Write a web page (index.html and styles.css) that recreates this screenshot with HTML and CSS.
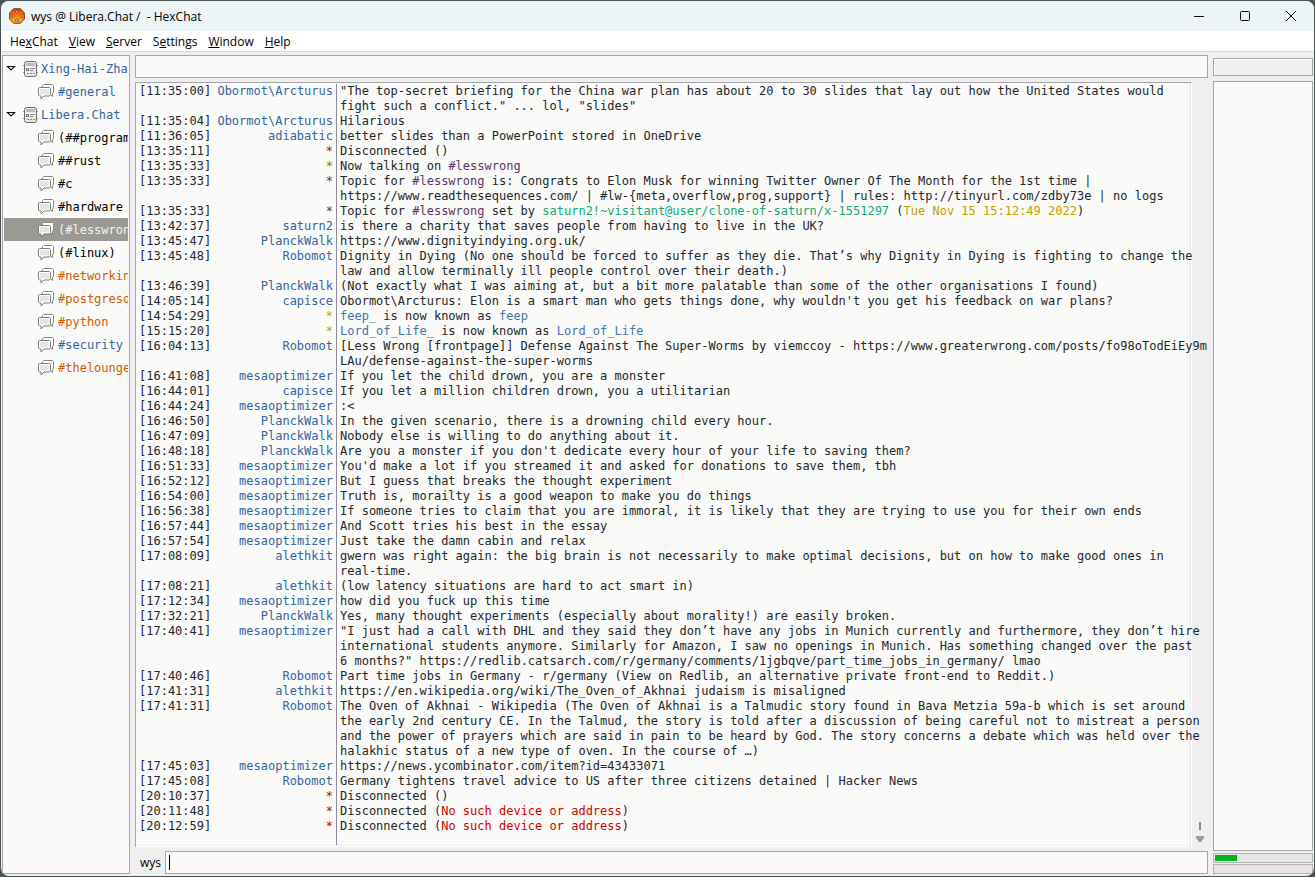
FILE: index.html
```html
<!DOCTYPE html>
<html lang="en">
<head>
    <meta charset="UTF-8">
    <meta name="viewport" content="width=device-width, initial-scale=1.0">
    <title>wys @ Libera.Chat / - HexChat</title>
    <link rel="stylesheet" href="styles.css">
</head>
<body>
    <!-- shared icons -->
    <svg class="defs" width="0" height="0" aria-hidden="true">
        <symbol id="arrow" viewBox="0 0 10 7">
            <path d="M1.500 1.500h7L5 5z" fill="#fff" stroke="#111" stroke-width="1.2"/>
        </symbol>
        <symbol id="server" viewBox="0 0 16 16">
            <path d="M0 4.500h2M0 11.500h2M13 4.500h2M13 11.500h2" stroke="#999"/>
            <rect x="1.500" y=".5" width="12" height="15" rx="2" fill="#e8e8e6" stroke="#6c6c6a"/>
            <rect x="3" y="2" width="9" height="3" fill="#bcbcba"/>
            <path d="M3 6.500h9" stroke="#fff"/>
            <rect x="3.500" y="7.500" width="2" height="2" fill="#fff" stroke="#777"/>
            <path d="M7 7.500h5M7 9.500h3" stroke="#8c8c8a"/>
            <path d="M4 12.500h2M7 12.500h2M10 12.500h2" stroke="#888"/>
        </symbol>
        <symbol id="channel" viewBox="0 0 16 16">
            <path d="M4.500 3V1.500l1-1h9l1 1V8l-1 2v2.500L12 10z" fill="#fff" stroke="#888885"/>
            <path d="M1.500 3.500h10l1 1v6l-1 1.500H6l-3 3v-3H1.500l-1-1v-7z" fill="#fff" stroke="#7c7c7a"/>
            <path d="M2 5h9v5.500H2z" fill="#e4e4e2"/>
        </symbol>
    </svg>

    <div class="window">
        <header class="titlebar">
            <svg class="logo" width="16" height="16" viewBox="0 0 16 16">
                <defs>
                    <linearGradient id="flame" x1="0" y1="0" x2="0" y2="1">
                        <stop offset="0" stop-color="#e8450c"/>
                        <stop offset="1" stop-color="#ffc21c"/>
                    </linearGradient>
                </defs>
                <path d="M4.500 .8h7L15.300 5v6l-3.800 4.200h-7L.7 11V5z" fill="url(#flame)" stroke="#7c2a08"/>
                <path d="M6 3h4L8 5.500zM6 13h4l-2-2.500zM3 6v4l2.500-2zM13 6v4l-2.500-2z" fill="#f7efe6" stroke="#8c3008" stroke-width=".8"/>
            </svg>
            <h1>wys @ Libera.Chat /&nbsp; - HexChat</h1>
            <div class="controls">
                <button aria-label="Minimize"><svg width="12" height="12"><path d="M1 6.500h10"/></svg></button>
                <button aria-label="Maximize"><svg width="12" height="12"><rect x="1.500" y="1.500" width="9" height="9" rx="1"/></svg></button>
                <button aria-label="Close"><svg width="12" height="12"><path d="M1 1l10 10M11 1L1 11"/></svg></button>
            </div>
        </header>

        <nav class="menu">
            <button>He<u>x</u>Chat</button>
            <button><u>V</u>iew</button>
            <button><u>S</u>erver</button>
            <button>S<u>e</u>ttings</button>
            <button><u>W</u>indow</button>
            <button><u>H</u>elp</button>
        </nav>

        <div class="content">
            <aside class="tree">
                <button class="network talk"><svg class="arrow"><use href="#arrow"/></svg><svg class="icon"><use href="#server"/></svg>Xing-Hai-Zhan</button>
                <button class="talk"><svg class="icon"><use href="#channel"/></svg>#general</button>
                <button class="network talk"><svg class="arrow"><use href="#arrow"/></svg><svg class="icon"><use href="#server"/></svg>Libera.Chat</button>
                <button><svg class="icon"><use href="#channel"/></svg>(##programming)</button>
                <button><svg class="icon"><use href="#channel"/></svg>##rust</button>
                <button><svg class="icon"><use href="#channel"/></svg>#c</button>
                <button><svg class="icon"><use href="#channel"/></svg>#hardware</button>
                <button class="selected"><svg class="icon"><use href="#channel"/></svg>(#lesswrong)</button>
                <button><svg class="icon"><use href="#channel"/></svg>(#linux)</button>
                <button class="unread"><svg class="icon"><use href="#channel"/></svg>#networking</button>
                <button class="unread"><svg class="icon"><use href="#channel"/></svg>#postgresql</button>
                <button class="unread"><svg class="icon"><use href="#channel"/></svg>#python</button>
                <button class="talk"><svg class="icon"><use href="#channel"/></svg>#security</button>
                <button class="unread"><svg class="icon"><use href="#channel"/></svg>#thelounge</button>
            </aside>

            <main>
                <input class="topic" type="text" aria-label="Topic">
                <div class="chat">
                    <div class="log">
                        <table>
                            <tr><td>[11:35:00]</td><td>Obormot\Arcturus</td><td>"The top-secret briefing for the China war plan has about 20 to 30 slides that lay out how the United States would<br>fight such a conflict." ... lol, "slides"</td></tr>
                            <tr><td>[11:35:04]</td><td>Obormot\Arcturus</td><td>Hilarious</td></tr>
                            <tr><td>[11:36:05]</td><td>adiabatic</td><td>better slides than a PowerPoint stored in OneDrive</td></tr>
                            <tr><td>[13:35:11]</td><td class="red">*</td><td>Disconnected ()</td></tr>
                            <tr><td>[13:35:33]</td><td class="green">*</td><td>Now talking on <span class="purple">#lesswrong</span></td></tr>
                            <tr><td>[13:35:33]</td><td class="purple">*</td><td>Topic for <span class="purple">#lesswrong</span> is: Congrats to Elon Musk for winning Twitter Owner Of The Month for the 1st time |<br><a href="https://www.readthesequences.com/">https://www.readthesequences.com/</a> | #lw-{meta,overflow,prog,support} | rules: <a href="http://tinyurl.com/zdby73e">http://tinyurl.com/zdby73e</a> | no logs</td></tr>
                            <tr><td>[13:35:33]</td><td class="purple">*</td><td>Topic for <span class="purple">#lesswrong</span> set by <span class="teal">saturn2!~visitant@user/clone-of-saturn/x-1551297</span> (<span class="yellow">Tue Nov 15 15:12:49 2022</span>)</td></tr>
                            <tr><td>[13:42:37]</td><td>saturn2</td><td>is there a charity that saves people from having to live in the UK?</td></tr>
                            <tr><td>[13:45:47]</td><td>PlanckWalk</td><td><a href="https://www.dignityindying.org.uk/">https://www.dignityindying.org.uk/</a></td></tr>
                            <tr><td>[13:45:48]</td><td>Robomot</td><td>Dignity in Dying (No one should be forced to suffer as they die. That’s why Dignity in Dying is fighting to change the<br>law and allow terminally ill people control over their death.)</td></tr>
                            <tr><td>[13:46:39]</td><td>PlanckWalk</td><td>(Not exactly what I was aiming at, but a bit more palatable than some of the other organisations I found)</td></tr>
                            <tr><td>[14:05:14]</td><td>capisce</td><td>Obormot\Arcturus: Elon is a smart man who gets things done, why wouldn't you get his feedback on war plans?</td></tr>
                            <tr><td>[14:54:29]</td><td class="yellow">*</td><td><span class="blue">feep_</span> is now known as <span class="blue">feep</span></td></tr>
                            <tr><td>[15:15:20]</td><td class="yellow">*</td><td><span class="blue">Lord_of_Life_</span> is now known as <span class="blue">Lord_of_Life</span></td></tr>
                            <tr><td>[16:04:13]</td><td>Robomot</td><td>[Less Wrong [frontpage]] Defense Against The Super-Worms by viemccoy - <a href="https://www.greaterwrong.com/posts/fo98oTodEiEy9mLAu/defense-against-the-super-worms">https://www.greaterwrong.com/posts/fo98oTodEiEy9m<br>LAu/defense-against-the-super-worms</a></td></tr>
                            <tr><td>[16:41:08]</td><td>mesaoptimizer</td><td>If you let the child drown, you are a monster</td></tr>
                            <tr><td>[16:44:01]</td><td>capisce</td><td>If you let a million children drown, you a utilitarian</td></tr>
                            <tr><td>[16:44:24]</td><td>mesaoptimizer</td><td>:&lt;</td></tr>
                            <tr><td>[16:46:50]</td><td>PlanckWalk</td><td>In the given scenario, there is a drowning child every hour.</td></tr>
                            <tr><td>[16:47:09]</td><td>PlanckWalk</td><td>Nobody else is willing to do anything about it.</td></tr>
                            <tr><td>[16:48:18]</td><td>PlanckWalk</td><td>Are you a monster if you don't dedicate every hour of your life to saving them?</td></tr>
                            <tr><td>[16:51:33]</td><td>mesaoptimizer</td><td>You'd make a lot if you streamed it and asked for donations to save them, tbh</td></tr>
                            <tr><td>[16:52:12]</td><td>mesaoptimizer</td><td>But I guess that breaks the thought experiment</td></tr>
                            <tr><td>[16:54:00]</td><td>mesaoptimizer</td><td>Truth is, morailty is a good weapon to make you do things</td></tr>
                            <tr><td>[16:56:38]</td><td>mesaoptimizer</td><td>If someone tries to claim that you are immoral, it is likely that they are trying to use you for their own ends</td></tr>
                            <tr><td>[16:57:44]</td><td>mesaoptimizer</td><td>And Scott tries his best in the essay</td></tr>
                            <tr><td>[16:57:54]</td><td>mesaoptimizer</td><td>Just take the damn cabin and relax</td></tr>
                            <tr><td>[17:08:09]</td><td>alethkit</td><td>gwern was right again: the big brain is not necessarily to make optimal decisions, but on how to make good ones in<br>real-time.</td></tr>
                            <tr><td>[17:08:21]</td><td>alethkit</td><td>(low latency situations are hard to act smart in)</td></tr>
                            <tr><td>[17:12:34]</td><td>mesaoptimizer</td><td>how did you fuck up this time</td></tr>
                            <tr><td>[17:32:21]</td><td>PlanckWalk</td><td>Yes, many thought experiments (especially about morality!) are easily broken.</td></tr>
                            <tr><td>[17:40:41]</td><td>mesaoptimizer</td><td>"I just had a call with DHL and they said they don’t have any jobs in Munich currently and furthermore, they don’t hire<br>international students anymore. Similarly for Amazon, I saw no openings in Munich. Has something changed over the past<br>6 months?" <a href="https://redlib.catsarch.com/r/germany/comments/1jgbqve/part_time_jobs_in_germany/">https://redlib.catsarch.com/r/germany/comments/1jgbqve/part_time_jobs_in_germany/</a> lmao</td></tr>
                            <tr><td>[17:40:46]</td><td>Robomot</td><td>Part time jobs in Germany - r/germany (View on Redlib, an alternative private front-end to Reddit.)</td></tr>
                            <tr><td>[17:41:31]</td><td>alethkit</td><td><a href="https://en.wikipedia.org/wiki/The_Oven_of_Akhnai">https://en.wikipedia.org/wiki/The_Oven_of_Akhnai</a> judaism is misaligned</td></tr>
                            <tr><td>[17:41:31]</td><td>Robomot</td><td>The Oven of Akhnai - Wikipedia (The Oven of Akhnai is a Talmudic story found in Bava Metzia 59a-b which is set around<br>the early 2nd century CE. In the Talmud, the story is told after a discussion of being careful not to mistreat a person<br>and the power of prayers which are said in pain to be heard by God. The story concerns a debate which was held over the<br>halakhic status of a new type of oven. In the course of …)</td></tr>
                            <tr><td>[17:45:03]</td><td>mesaoptimizer</td><td><a href="https://news.ycombinator.com/item?id=43433071">https://news.ycombinator.com/item?id=43433071</a></td></tr>
                            <tr><td>[17:45:08]</td><td>Robomot</td><td>Germany tightens travel advice to US after three citizens detained | Hacker News</td></tr>
                            <tr><td>[20:10:37]</td><td class="red">*</td><td>Disconnected ()</td></tr>
                            <tr><td>[20:11:48]</td><td class="red">*</td><td>Disconnected (<span class="red">No such device or address</span>)</td></tr>
                            <tr><td>[20:12:59]</td><td class="red">*</td><td>Disconnected (<span class="red">No such device or address</span>)</td></tr>
                            <tr class="rest"><td></td><td></td><td></td></tr>
                        </table>
                    </div>
                    <div class="scrollbar">
                        <span class="thumb"></span>
                        <svg width="8" height="6"><path d="M0 0h8v2L5 6H3L0 2z" fill="#9d9d9d"/></svg>
                    </div>
                </div>
                <div class="entry">
                    <label for="message">wys</label>
                    <div class="field"><input id="message" type="text"><span class="caret"></span></div>
                </div>
            </main>

            <aside class="users">
                <div class="count"></div>
                <div class="list"></div>
                <progress value="22" max="97" aria-label="Lag"></progress>
                <progress value="0" max="97" aria-label="Throttle"></progress>
            </aside>
        </div>
    </div>
</body>
</html>
```
FILE: styles.css
```css
* {
    margin: 0;
    padding: 0;
    box-sizing: border-box;
}
body {
    height: 100vh;
    padding: 1px;
    background: #4c5555;
    font-family: 'Open Sans', sans-serif;
    font-size: 12px;
    color: #000;
    overflow: hidden;
}
.defs {
    position: absolute;
}
button {
    border: none;
    background: none;
    font: inherit;
    color: inherit;
}
input {
    width: 100%;
    border: 1px solid #a5a5aa;
    background: #fafaf8;
    outline: none;
    padding: 0 4px;
}
.window {
    display: flex;
    flex-direction: column;
    height: 100%;
    background: #efefef;
    border-radius: 8px;
    overflow: hidden;
}

/* title bar */
.titlebar {
    display: flex;
    align-items: center;
    flex: none;
    height: 30px;
    padding-left: 8px;
    background: #edf4f5;
}
.titlebar h1 {
    margin-left: 6px;
    font-size: 12px;
    font-weight: normal;
}
.controls {
    display: flex;
    margin-left: auto;
}
.controls button {
    width: 46px;
    height: 28px;
}
.controls svg {
    display: block;
    margin: auto;
    fill: none;
    stroke: #111;
}

/* menu */
.menu {
    display: flex;
    flex: none;
    gap: 11px;
    height: 21px;
    padding-left: 9px;
    background: #fff;
    border-bottom: 1px solid #d9d9d9;
}
.content {
    display: flex;
    flex: 1;
    gap: 5px;
    min-height: 0;
    padding: 3px 1px 2px 1px;
}

/* channel tree */
.tree {
    flex: none;
    width: 128px;
    padding: 1px;
    border: 1px solid #a5a5aa;
    background: #fafaf8;
    font-family: 'DejaVu Sans Mono', monospace;
    overflow: hidden;
}
.tree button {
    display: flex;
    align-items: center;
    width: 100%;
    height: 23px;
    padding-left: 34px;
    white-space: nowrap;
    overflow: hidden;
}
.tree .network {
    padding-left: 2px;
}
.arrow {
    flex: none;
    width: 10px;
    height: 7px;
    margin-right: 7px;
}
.icon {
    flex: none;
    width: 16px;
    height: 16px;
    margin-right: 4px;
}
.network .icon {
    margin-right: 2px;
}
.tree .talk {
    color: #3465a4;
}
.tree .unread {
    color: #ce5c00;
}
.tree .selected {
    background: #9a9993;
    color: #f4f4f0;
}

/* chat */
main {
    display: flex;
    flex-direction: column;
    flex: 1;
    gap: 4px;
    min-width: 0;
}
.topic {
    flex: none;
    height: 23px;
}
.chat {
    display: flex;
    flex: 1;
    min-height: 0;
}
.log {
    flex: 1;
    min-width: 0;
    padding: 1px 4px 2px 3px;
    border-top: 1px solid #a5a5aa;
    border-left: 1px solid #a5a5aa;
    border-right: 1px solid #fff;
    background: #fafaf8;
    box-shadow: inset -2px 0 #efefef, inset -3px -1px #fff, inset -4px -2px #efefef;
}
table {
    table-layout: fixed;
    width: 100%;
    height: 100%;
    border-spacing: 0;
    font-family: 'DejaVu Sans Mono', monospace;
    font-size: 12px;
    line-height: 15px;
    color: #23282a;
}
td {
    vertical-align: top;
    white-space: nowrap;
}
td:first-child {
    width: 72px;
}
td:nth-child(2) {
    width: 126px;
    padding-right: 3px;
    border-right: 1px solid #8d8a9b;
    text-align: right;
}
td:nth-child(2):not([class]) {
    color: #3465a4;
}
td:nth-child(3) {
    padding-left: 3px;
}
.rest {
    height: 100%;
}
td a {
    color: inherit;
    text-decoration: none;
}
.blue {
    color: #4675ac;
}
.red {
    color: #cc0000;
}
.green {
    color: #4e9a06;
}
.purple {
    color: #5c3566;
}
.yellow {
    color: #c4a000;
}
.teal {
    color: #11a879;
}
.scrollbar {
    display: flex;
    flex-direction: column;
    align-items: center;
    justify-content: flex-end;
    flex: none;
    width: 16px;
    padding-bottom: 5px;
}
.thumb {
    width: 2px;
    height: 8px;
    margin-bottom: 6px;
    background: #8b8b8b;
}

/* input row */
.entry {
    display: flex;
    align-items: center;
    flex: none;
    gap: 4px;
    height: 23px;
    padding-left: 5px;
}
.field {
    position: relative;
    flex: 1;
    height: 23px;
}
.field input {
    display: block;
    height: 100%;
}
.caret {
    position: absolute;
    left: 4px;
    top: 4px;
    width: 1px;
    height: 15px;
    background: #000;
}

/* user list */
.users {
    display: flex;
    flex-direction: column;
    flex: none;
    width: 100px;
    padding-top: 3px;
}
.count {
    height: 18px;
    margin-bottom: 5px;
    border: 1px solid #a5a5aa;
    box-shadow: inset 1px 1px #fff;
}
.list {
    flex: 1;
    margin-bottom: 1px;
    border: 1px solid #a5a5aa;
    background: #fafaf8;
}
progress {
    display: block;
    width: 100%;
    height: 10px;
    margin-top: 1px;
    padding: 1px;
    border: 1px solid #b5b5b5;
    background: #e6e6e6;
    appearance: none;
}
progress::-webkit-progress-bar {
    background: #e6e6e6;
}
progress::-webkit-progress-value {
    background: #06b025;
}
```
